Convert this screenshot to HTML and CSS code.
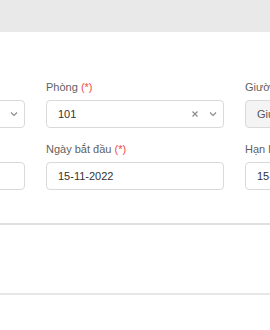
FILE: index.html
```html
<!DOCTYPE html>
<html lang="vi">
<head>
    <meta charset="UTF-8">
    <title>Hợp đồng</title>
    <link rel="stylesheet" href="styles.css">
</head>
<body>
    <div class="topbar"></div>

    <section class="panel">
        <div class="form-grid">
            <div class="field">
                <label>Khu <span class="req">(*)</span></label>
                <div class="box">
                    <span class="value">A</span>
                    <span class="icons">
                        <svg class="chev" width="10" height="10" viewBox="0 0 10 10"><path d="M2 3.5 L5 6.5 L8 3.5" fill="none" stroke="#8c8c8c" stroke-width="1.2"/></svg>
                    </span>
                </div>
            </div>
            <div class="field">
                <label>Phòng <span class="req">(*)</span></label>
                <div class="box">
                    <span class="value">101</span>
                    <span class="icons">
                        <svg class="clear" width="10" height="10" viewBox="0 0 10 10"><path d="M2.5 2.5 L7.5 7.5 M7.5 2.5 L2.5 7.5" fill="none" stroke="#8c8c8c" stroke-width="1.2"/></svg>
                        <svg class="chev" width="10" height="10" viewBox="0 0 10 10"><path d="M2 3.5 L5 6.5 L8 3.5" fill="none" stroke="#8c8c8c" stroke-width="1.2"/></svg>
                    </span>
                </div>
            </div>
            <div class="field">
                <label>Giường <span class="req">(*)</span></label>
                <div class="box disabled">
                    <span class="value">Giường 1</span>
                </div>
            </div>

            <div class="field">
                <label>Ngày ký <span class="req">(*)</span></label>
                <div class="box">
                    <span class="value">15-11-2022</span>
                </div>
            </div>
            <div class="field">
                <label>Ngày bắt đầu <span class="req">(*)</span></label>
                <div class="box">
                    <span class="value">15-11-2022</span>
                </div>
            </div>
            <div class="field">
                <label>Hạn hợp đồng <span class="req">(*)</span></label>
                <div class="box">
                    <span class="value">15-05-2023</span>
                </div>
            </div>
        </div>
    </section>

    <div class="divider"></div>
    <div class="footer-space"></div>
    <div class="divider light"></div>
</body>
</html>
```

FILE: styles.css
```css
body {
    margin: 0;
    padding: 0;
    font-family: 'Liberation Sans', Arial, sans-serif;
    background: #ffffff;
    color: #333;
    overflow: hidden;
}
.topbar {
    height: 32px;
    background: #e9e9e9;
}
.panel {
    padding-top: 48px;
    height: 143px;
    overflow: hidden;
}
.form-grid {
    display: grid;
    grid-template-columns: 178px 178px 178px;
    column-gap: 21px;
    row-gap: 14px;
    margin-left: -153px;
    width: 576px;
}
.field label {
    display: block;
    font-size: 11px;
    line-height: 14px;
    color: #5f5f5f;
    margin-bottom: 6px;
    white-space: nowrap;
}
.field .req {
    color: #f04a4a;
}
.box {
    box-sizing: border-box;
    height: 28px;
    border: 1px solid #d9d9d9;
    border-radius: 4px;
    display: flex;
    align-items: center;
    justify-content: space-between;
    padding: 0 5px 0 11px;
    font-size: 11px;
    color: #333;
    background: #fff;
    white-space: nowrap;
}
.box.disabled {
    background: #f4f4f4;
    color: #555;
}
.icons {
    display: flex;
    align-items: center;
    gap: 8px;
}
.icons svg {
    display: block;
}
.divider {
    height: 2px;
    background: #e0e0e0;
}
.divider.light {
    background: #e6e6e9;
}
.footer-space {
    height: 68px;
}
```
